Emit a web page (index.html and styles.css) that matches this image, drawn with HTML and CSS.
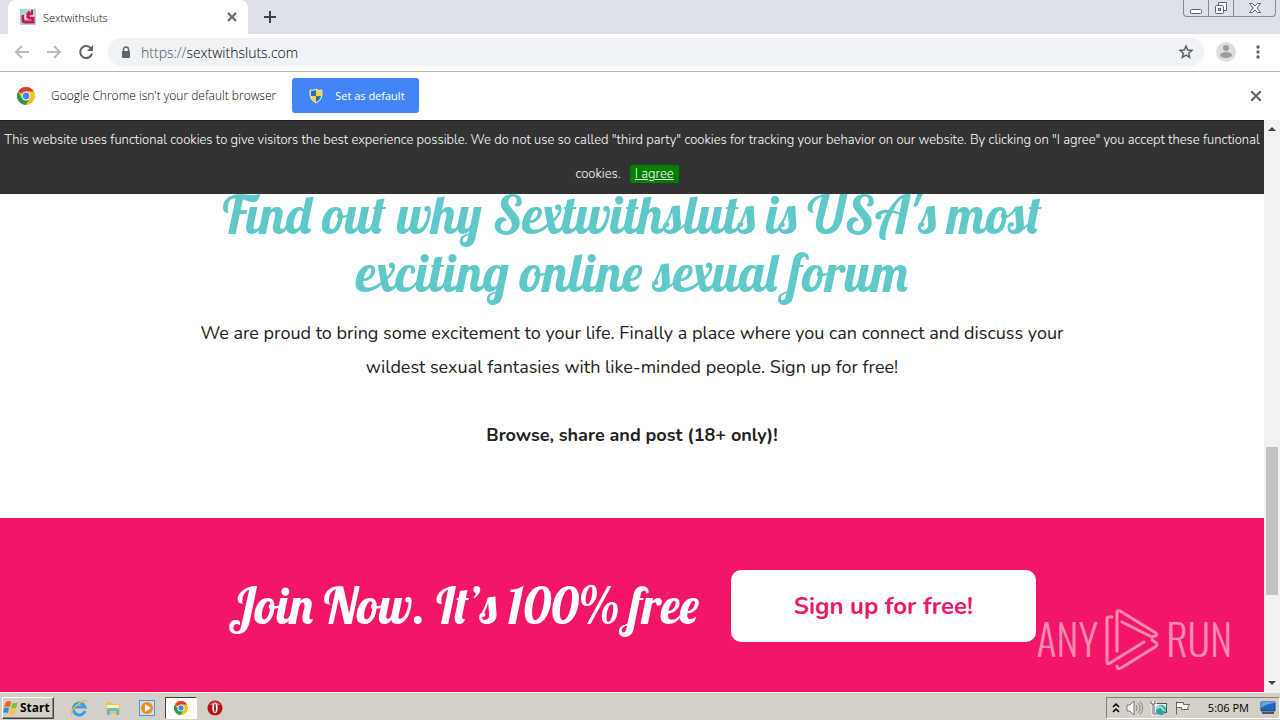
FILE: index.html
```html
<!DOCTYPE html>
<html lang="en">
  <head>
    <meta charset="UTF-8" />
    <meta name="viewport" content="width=device-width, initial-scale=1.0" />
    <title>Sextwithsluts</title>
    <link rel="stylesheet" href="styles.css">
  </head>
  <body>
    <header class="tabstrip">
      <div class="tab">
        <svg class="favicon" viewBox="0 0 16 16" width="16" height="16">
          <rect width="16" height="16" fill="#a9d5cf" />
          <path d="M3 6v5q0 2 2 2h8V9H8V5h5" fill="none" stroke="#d80f55" stroke-width="3" />
          <path d="M9 2v3M12 1v3" stroke="#d80f55" stroke-width="2" />
          <path d="M5 6v4h3M10 7h4" fill="none" stroke="#fff" />
        </svg>
        <span class="tab-title">Sextwithsluts</span>
        <button class="icon-btn" aria-label="Close tab">
          <svg viewBox="0 0 10 10" width="10" height="10"><path d="M1 1l8 8M9 1L1 9" stroke="#5f6368" stroke-width="2" /></svg>
        </button>
      </div>
      <button class="icon-btn new-tab" aria-label="New tab">
        <svg viewBox="0 0 12 12" width="12" height="12"><path d="M6 0v12M0 6h12" stroke="#3c4043" stroke-width="2" /></svg>
      </button>
      <div class="window-buttons">
        <button aria-label="Minimize"><svg viewBox="0 0 14 14" width="14" height="14"><rect x="1.500" y="8.500" width="11" height="4" rx="1" fill="#fff" stroke="#5c6370" /></svg></button>
        <button aria-label="Restore"><svg viewBox="0 0 14 14" width="14" height="14"><path d="M4.500 4.500v-3h8v8h-3" fill="#fff" stroke="#5c6370" /><rect x="1.500" y="4.500" width="8" height="8" rx="1" fill="#fff" stroke="#5c6370" /><rect x="4.500" y="7.500" width="2" height="2" fill="none" stroke="#5c6370" /></svg></button>
        <button class="wide" aria-label="Close window"><svg viewBox="0 0 14 14" width="14" height="14"><path d="M1.500 2.500h3L7 5l2.500-2.500h3L9 7l3.500 4.500h-3L7 9l-2.500 2.500h-3L5 7z" fill="#fff" stroke="#5c6370" /></svg></button>
      </div>
    </header>

    <nav class="toolbar">
      <button class="icon-btn" aria-label="Back"><svg viewBox="0 0 16 16" width="16" height="16"><path d="M15 8H2M8 2L2 8l6 6" fill="none" stroke="#b9bbbe" stroke-width="2" /></svg></button>
      <button class="icon-btn" aria-label="Forward"><svg viewBox="0 0 16 16" width="16" height="16"><path d="M1 8h13M8 2l6 6-6 6" fill="none" stroke="#b9bbbe" stroke-width="2" /></svg></button>
      <button class="icon-btn" aria-label="Reload"><svg viewBox="0 0 16 16" width="16" height="16"><path d="M13 4.500A6 6 0 1 0 14 9.500" fill="none" stroke="#5f6368" stroke-width="2" /><path d="M15 1v6H9z" fill="#5f6368" /></svg></button>
      <div class="omnibox">
        <svg viewBox="0 0 10 13" width="10" height="13"><path d="M2.500 6V3.500a2.500 2.500 0 0 1 5 0V6" fill="none" stroke="#5f6368" stroke-width="1.500" /><rect x="1" y="5" width="8" height="7" rx="1" fill="#5f6368" /></svg>
        <a class="url" href="#"><span>https://</span>sextwithsluts.com</a>
        <button class="icon-btn" aria-label="Bookmark"><svg viewBox="0 0 16 16" width="16" height="16"><path d="M8 2l1.700 4 4.300.400-3.300 2.800 1 4.300L8 11.200l-3.700 2.300 1-4.300L2 6.400 6.300 6z" fill="none" stroke="#5f6368" stroke-width="1.500" /></svg></button>
      </div>
      <button class="icon-btn profile" aria-label="Profile"><svg viewBox="0 0 20 20" width="20" height="20"><circle cx="10" cy="10" r="10" fill="#dedede" /><circle cx="10" cy="6" r="3" fill="#9e9e9e" /><ellipse cx="10" cy="13" rx="6" ry="3" fill="#9e9e9e" /></svg></button>
      <button class="icon-btn" aria-label="Menu"><svg viewBox="0 0 4 14" width="4" height="14"><g fill="#5f6368"><circle cx="2" cy="2" r="1.700" /><circle cx="2" cy="7" r="1.700" /><circle cx="2" cy="12" r="1.700" /></g></svg></button>
    </nav>

    <div class="infobar">
      <svg viewBox="0 0 18 18" width="18" height="18">
        <circle cx="9" cy="9" r="9" fill="#fbc116" />
        <path d="M9 9L1.200 4.500A9 9 0 0 1 16.800 4.500H9z" fill="#df3e31" />
        <path d="M1.200 4.500A9 9 0 0 0 8.500 18l4.400-6.700L5 11z" fill="#279b56" />
        <circle cx="9" cy="9" r="4.500" fill="#fff" /><circle cx="9" cy="9" r="3.400" fill="#4585ee" />
      </svg>
      <span class="infobar-text">Google Chrome isn't your default browser</span>
      <button class="default-btn">
        <svg viewBox="0 0 14 16" width="14" height="16">
          <path d="M7 1q3 2 6 1v5q0 5-6 8-6-3-6-8V2q3 1 6-1z" fill="#f8d347" stroke="#d5e4ed" />
          <path d="M7 2v6H2V3q3 0 5-1zM7 8h5q-1 4-5 6z" fill="#2871b5" />
        </svg>
        Set as default
      </button>
      <button class="icon-btn infobar-close" aria-label="Dismiss"><svg viewBox="0 0 10 10" width="10" height="10"><path d="M0 0l10 10M10 0L0 10" stroke="#5f6368" stroke-width="2" /></svg></button>
    </div>

    <div class="viewport">
      <main class="page">
        <div class="cookie-bar">
          This website uses functional cookies to give visitors the best experience possible. We do not use so called "third party" cookies for tracking your behavior on our website. By clicking on "I agree" you accept these functional cookies. <a class="agree" href="#">I agree</a>
        </div>
        <section class="about">
          <h1>Find out why Sextwithsluts is USA's most<br>exciting online sexual forum</h1>
          <p>We are proud to bring some excitement to your life. Finally a place where you can connect and discuss your<br>wildest sexual fantasies with like-minded people. Sign up for free!</p>
          <p class="browse">Browse, share and post (18+ only)!</p>
        </section>
        <section class="join">
          <h2>Join Now. It’s 100% free</h2>
          <a class="signup" href="#">Sign up for free!</a>
        </section>
        <div class="watermark">
          <span>ANY</span>
          <svg viewBox="0 0 56 64" width="56" height="64">
            <g fill="none" stroke="#fff" stroke-width="3" stroke-linejoin="round" stroke-linecap="round">
              <path d="M8 9H5Q3 9 3 11v43q0 3 3 1l34-21" />
              <path d="M13 43V5q0-3 3-2l36 22q2 2-1 3l-3 1L18 14" />
              <path d="M13 58q0 4 4 2l34-21q4-3 0-5l-3-2" />
            </g>
          </svg>
          <span>RUN</span>
        </div>
      </main>
      <div class="scrollbar">
        <svg viewBox="0 0 16 16" width="16" height="16"><path d="M4 11l4-4 4 4z" fill="#444" /></svg>
        <div class="track"><div class="thumb"></div></div>
        <svg viewBox="0 0 16 16" width="16" height="16"><path d="M4 5l4 4 4-4z" fill="#444" /></svg>
      </div>
    </div>

    <footer class="taskbar">
      <button class="start">
        <svg viewBox="0 0 16 16" width="16" height="16">
          <path d="M3 2q3-2 5 0L7 7Q4 6 1 7z" fill="#ed6524" /><path d="M9 3q3 1 6-1l-2 6q-2 1-5 0z" fill="#8abe3a" />
          <path d="M1 8q3-1 5 0l-1 5q-3-1-5 0z" fill="#398bd7" /><path d="M7 9q3 1 6 0l-2 5q-2 1-5 0z" fill="#f9c530" />
        </svg>
        Start
      </button>
      <button class="task" aria-label="Internet Explorer"><svg viewBox="0 0 18 18" width="18" height="18"><path d="M15 12a6 6 0 1 1 0-4H5" fill="none" stroke="#39a1df" stroke-width="3" /><path d="M2 16Q-1 13 7 6T17 3" fill="none" stroke="#e7bd43" stroke-width="1.500" /></svg></button>
      <button class="task" aria-label="Explorer"><svg viewBox="0 0 18 18" width="18" height="18"><path d="M2 3h6l1 2h7v10H2z" fill="#ebc657" /><path d="M3 6h12v3H3z" fill="#fff2ae" /><path d="M3 16v-5q0-2 2-2h8q2 0 2 2v5h-3v-4H6v4z" fill="#66b7e1" /></svg></button>
      <button class="task" aria-label="Media Player"><svg viewBox="0 0 18 18" width="18" height="18"><rect x="1.500" y="1.500" width="15" height="15" fill="#c7e2f6" stroke="#5d96c5" /><circle cx="9" cy="9" r="6" fill="#f28a1c" /><path d="M7 5l6 4-6 4z" fill="#fff" /></svg></button>
      <button class="task active" aria-label="Chrome">
        <svg viewBox="0 0 18 18" width="14" height="14">
          <circle cx="9" cy="9" r="9" fill="#fbc116" />
          <path d="M9 9L1.200 4.500A9 9 0 0 1 16.800 4.500H9z" fill="#df3e31" />
          <path d="M1.200 4.500A9 9 0 0 0 8.500 18l4.400-6.700L5 11z" fill="#279b56" />
          <circle cx="9" cy="9" r="4.500" fill="#fff" /><circle cx="9" cy="9" r="3.400" fill="#4585ee" />
        </svg>
      </button>
      <button class="task" aria-label="Opera"><svg viewBox="0 0 18 18" width="16" height="16"><circle cx="9" cy="9" r="8.500" fill="#b4131b" /><path d="M3 5q6-6 12 0-6 3-12 0" fill="#dd6962" /><ellipse cx="9" cy="9" rx="3" ry="6" fill="#fff" /><ellipse cx="9" cy="9" rx="1" ry="5" fill="#86111a" /></svg></button>
      <div class="tray">
        <svg viewBox="0 0 8 12" width="8" height="12"><path d="M1 5l3-3 3 3M1 10l3-3 3 3" fill="none" stroke="#000" stroke-width="1.500" /></svg>
        <svg viewBox="0 0 18 16" width="18" height="16"><path d="M1 5h3l4-4v14l-4-4H1z" fill="#fff" stroke="#777" /><path d="M10 5q2 3 0 6M12 3q4 5 0 10M14 1q5 7 0 14" fill="none" stroke="#888" /></svg>
        <svg viewBox="0 0 18 16" width="18" height="16"><rect x="4.500" y="3.500" width="12" height="9" fill="#d7eef2" stroke="#555" /><path d="M1 1v3h4V1M3 4v10h5" fill="none" stroke="#fff" stroke-width="3" /><path d="M1 1v3h4V1M3 4v10h5" fill="none" stroke="#555" /><circle cx="11" cy="10" r="5" fill="#2ba49a" /><path d="M7 9q3-4 5-1t3 2" fill="none" stroke="#a5e5d6" stroke-width="2" /></svg>
        <svg viewBox="0 0 18 16" width="18" height="16"><path d="M2.500 1.500v13M2.500 2.500h7v2h6l-2 3 1 2h-7v-2h-5" fill="#fff" stroke="#666" /></svg>
        <span class="clock">5:06 PM</span>
        <svg viewBox="0 0 16 14" width="16" height="14"><path d="M1 1h14v9H1z" fill="#1f67bc" stroke="#173f81" /><path d="M1 7q7-5 14-5v-1H1z" fill="#5fa3e0" /><path d="M2 12h12" stroke="#555" stroke-width="2" /></svg>
      </div>
    </footer>
  </body>
</html>
```
FILE: styles.css
```css
* {
  box-sizing: border-box;
}
body {
  margin: 0;
  height: 100vh;
  display: flex;
  flex-direction: column;
  overflow: hidden;
  font-family: Tahoma, "Open Sans", sans-serif;
  font-size: 12px;
  font-weight: 300;
  color: #000;
  background: #fff;
}
button {
  border: none;
  background: none;
  padding: 0;
  font: inherit;
  color: inherit;
}
svg {
  display: block;
  flex-shrink: 0;
}
.icon-btn {
  display: flex;
  align-items: center;
  justify-content: center;
}

/* browser frame */
.tabstrip {
  height: 34px;
  flex-shrink: 0;
  display: flex;
  align-items: flex-start;
  background: #dee1e8;
}
.tab {
  width: 240px;
  height: 34px;
  margin-left: 8px;
  padding: 0 11px 0 12px;
  display: flex;
  align-items: center;
  gap: 7px;
  background: #fff;
  border-radius: 8px 8px 0 0;
}
.tab-title {
  flex: 1;
  font-size: 11px;
}
.new-tab {
  height: 34px;
  margin-left: 16px;
}
.window-buttons {
  display: flex;
  height: 17px;
  margin-left: auto;
  margin-right: 4px;
  border: 1px solid #858a96;
  border-top: none;
  border-radius: 0 0 4px 4px;
}
.window-buttons button {
  width: 25px;
  display: flex;
  align-items: center;
  justify-content: center;
  border-right: 1px solid #858a96;
}
.window-buttons .wide {
  width: 41px;
  border-right: none;
}
.toolbar {
  height: 38px;
  flex-shrink: 0;
  display: flex;
  align-items: center;
  gap: 16px;
  padding: 0 20px 1px 14px;
  border-bottom: 1px solid #b4b7b9;
}
.omnibox {
  flex: 1;
  height: 28px;
  margin-left: -2px;
  padding: 0 10px 0 13px;
  display: flex;
  align-items: center;
  gap: 10px;
  background: #f0f3f6;
  border-radius: 14px;
}
.url {
  flex: 1;
  font-size: 14px;
  color: #000;
  text-decoration: none;
}
.url span {
  color: #4d5156;
}
.profile {
  margin: 0 4px 0 -4px;
}
.infobar {
  height: 48px;
  flex-shrink: 0;
  display: flex;
  align-items: center;
  padding: 0 19px 1px 17px;
}
.infobar-text {
  margin: 0 16px;
}
.default-btn {
  width: 127px;
  height: 35px;
  padding-left: 17px;
  display: flex;
  align-items: center;
  gap: 12px;
  font-size: 11px;
  font-weight: 400;
  color: #fff;
  background: #4285f4;
  border-radius: 3px;
}
.infobar-close {
  margin-left: auto;
}

/* web page */
.viewport {
  flex: 1;
  min-height: 0;
  display: flex;
}
.page {
  flex: 1;
  position: relative;
  overflow: hidden;
  display: flex;
  flex-direction: column;
  font-family: Nunito, "Noto Sans", sans-serif;
  font-weight: 400;
  text-align: center;
}
.cookie-bar {
  position: absolute;
  top: 0;
  left: 0;
  right: 0;
  padding: 2px 0 3px;
  border-top: 1px solid #222;
  font-size: 13px;
  font-weight: 300;
  line-height: 34px;
  color: #fff;
  background: #333;
}
.agree {
  margin: 0 10px 0 6px;
  padding: 0 5px;
  color: #fff;
  background: #008000;
  border-radius: 2px;
}
.about {
  flex: 1;
  padding-top: 66px;
}
h1,
h2 {
  margin: 0;
  font-family: Lobster, "Liberation Serif", serif;
  font-size: 52px;
  font-weight: normal;
  line-height: 58px;
}
h1 {
  color: #5fc8c8;
}
.about p {
  margin: 14px 0 0;
  font-size: 18px;
  line-height: 34px;
  color: #212121;
}
.about .browse {
  margin-top: 34px;
  font-weight: bold;
}
.join {
  height: 174px;
  padding-top: 2px;
  flex-shrink: 0;
  display: flex;
  align-items: center;
  justify-content: center;
  gap: 32px;
  background: #f21568;
}
.join h2 {
  font-size: 50px;
  color: #fff;
}
.signup {
  width: 305px;
  border-radius: 10px;
  background: #fff;
  font-size: 24px;
  font-weight: bold;
  line-height: 72px;
  color: #ec1767;
  text-decoration: none;
}
.watermark {
  position: absolute;
  right: 32px;
  bottom: 20px;
  display: flex;
  align-items: center;
  gap: 6px;
  font-family: Oswald, "Bebas Neue", sans-serif;
  font-size: 42px;
  font-weight: 300;
  line-height: 60px;
  color: #fff;
  opacity: 0.5;
}
.watermark span {
  padding-bottom: 4px;
}
.scrollbar {
  width: 16px;
  display: flex;
  flex-direction: column;
  background: #f1f1f1;
}
.track {
  flex: 1;
  padding: 0 2px;
  display: flex;
  flex-direction: column;
  justify-content: flex-end;
}
.thumb {
  height: 148px;
  margin-bottom: 81px;
  background: #c1c1c1;
}

/* taskbar */
.taskbar {
  height: 28px;
  flex-shrink: 0;
  display: flex;
  align-items: center;
  gap: 2px;
  padding: 2px 0 0 2px;
  background: #d4d0c8;
  border-top: 1px solid #f4f2ee;
  color: #000;
}
.start {
  width: 52px;
  height: 22px;
  margin-right: 7px;
  display: flex;
  align-items: center;
  gap: 1px;
  font-size: 12px;
  font-weight: bold;
  border: 1px solid;
  border-color: #fff #404040 #404040 #fff;
  box-shadow: inset -1px -1px #888;
}
.task {
  width: 32px;
  height: 22px;
  display: flex;
  align-items: center;
  justify-content: center;
}
.task.active {
  background: #fff;
  border: 1px solid;
  border-color: #404040 #fff #fff #404040;
}
.tray {
  height: 22px;
  margin-left: auto;
  padding: 0 3px 0 5px;
  display: flex;
  align-items: center;
  gap: 6px;
  border: 1px solid;
  border-color: #858179 #fff #fff #858179;
}
.clock {
  margin: 0 5px 0 10px;
  font-size: 11px;
  font-weight: 400;
}
```
